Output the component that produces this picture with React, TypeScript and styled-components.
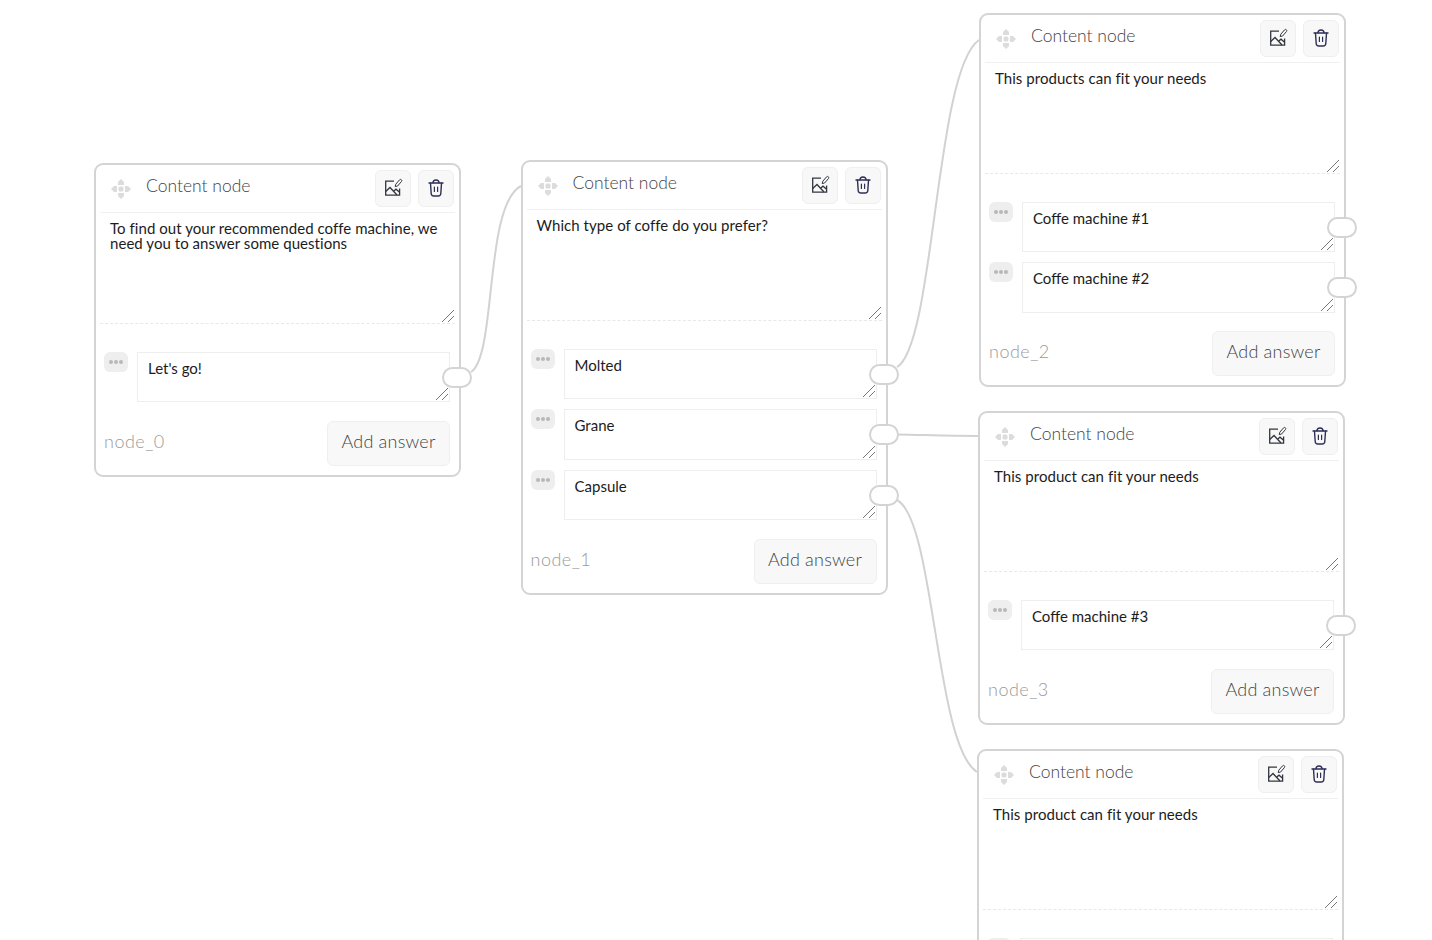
import styled, { createGlobalStyle, css } from "styled-components";

const GlobalStyle = createGlobalStyle`
  html, body {
    margin: 0;
    padding: 0;
    background: #fff;
    font-family: "Lato", "Noto Sans", sans-serif;
  }
`;

const resizer = css`
  &::-webkit-resizer {
    background-image: linear-gradient(
      135deg,
      transparent 47%,
      #777 47%,
      #777 52%,
      transparent 52%,
      transparent 71%,
      #777 71%,
      #777 76%,
      transparent 76%
    );
    background-size: 12px 12px;
    background-position: 2px 2px;
    background-repeat: no-repeat;
  }
`;

const Canvas = styled.div`
  position: relative;
  width: 1432px;
  height: 940px;
  overflow: hidden;
  background: #fff;
`;

const Edges = styled.svg`
  position: absolute;
  inset: 0;
  width: 1432px;
  height: 940px;
  fill: none;
  stroke: #d2d2d2;
  stroke-width: 2;
`;

const NodeCard = styled.div<{ $x: number; $y: number }>`
  position: absolute;
  left: ${(p) => p.$x}px;
  top: ${(p) => p.$y}px;
  width: 367px;
  box-sizing: border-box;
  display: flex;
  flex-direction: column;
  padding: 0 4px 9px;
  background: #fff;
  border: 2px solid #d4d4d4;
  border-radius: 9px;
`;

const Header = styled.div`
  height: 47px;
  display: flex;
  align-items: center;
  gap: 7px;
  padding: 0 1px 0 10px;
  border-bottom: 1px solid #f0f0f0;
`;

const DragIcon = styled.svg`
  width: 22px;
  height: 22px;
  margin-right: 7px;
  fill: #dcdcdc;
`;

const Title = styled.div`
  flex: 1;
  font-size: 17.5px;
  font-weight: 300;
  color: #444;
  margin-bottom: 6px;
`;

const IconButton = styled.button`
  width: 36px;
  height: 37px;
  margin-top: -1px;
  padding: 0;
  display: flex;
  align-items: center;
  justify-content: center;
  background: #f8f8f8;
  border: 1px solid #efefef;
  border-radius: 6px;
`;

const Description = styled.textarea`
  display: block;
  box-sizing: border-box;
  width: 100%;
  height: 111px;
  margin: 0;
  padding: 8px 10px;
  border: none;
  border-bottom: 1px dashed #e8e8e8;
  outline: none;
  font-family: inherit;
  font-size: 15px;
  line-height: 15px;
  letter-spacing: 0.05px;
  color: #1c1c1c;
  ${resizer}
`;

const Answers = styled.div`
  display: flex;
  flex-direction: column;
  gap: 10px;
  margin-top: 27.5px;
  padding: 0 5px 0 4px;
`;

const AnswerRow = styled.div`
  position: relative;
  display: flex;
  align-items: flex-start;
  gap: 9px;
`;

const DotsButton = styled.div`
  flex: none;
  width: 24px;
  height: 20px;
  display: flex;
  align-items: center;
  justify-content: center;
  gap: 1px;
  background: #eeeeee;
  border-radius: 6px;
`;

const Dot = styled.span`
  width: 4px;
  height: 4px;
  border-radius: 50%;
  background: #b8b8b8;
`;

const AnswerInput = styled.textarea`
  display: block;
  box-sizing: border-box;
  flex: 1;
  height: 50.5px;
  margin: 0;
  padding: 6px 10px;
  border: 1px solid #eeeeee;
  border-radius: 0;
  outline: none;
  font-family: inherit;
  font-size: 15px;
  line-height: 18px;
  color: #1c1c1c;
  ${resizer}
`;

const Handle = styled.div`
  position: absolute;
  right: -22px;
  top: 15px;
  box-sizing: border-box;
  width: 30px;
  height: 21px;
  background: #fff;
  border: 2px solid #d4d4d4;
  border-radius: 11px;
`;

const Footer = styled.div`
  display: flex;
  align-items: center;
  justify-content: space-between;
  margin-top: 18.5px;
  padding: 0 5px 0 4px;
`;

const NodeId = styled.span`
  font-size: 18px;
  font-weight: 300;
  letter-spacing: 0.5px;
  color: #9a9a9a;
  margin-bottom: 5px;
`;

const AddButton = styled.button`
  width: 123px;
  height: 45px;
  padding: 0 0 5px;
  background: #f8f8f8;
  border: 1px solid #efefef;
  border-radius: 6px;
  font-family: inherit;
  font-size: 18px;
  font-weight: 300;
  letter-spacing: 0.2px;
  color: #444;
`;

const EditImageIcon = () => (
  <svg width="20" height="20" viewBox="0 0 20 20" fill="none" stroke="#33363f" strokeWidth="1.3">
    <path d="M11 3.2H2.7V17.2H16.6V10.5" />
    <path d="M2.7 13.5L7 9.5L14 17" />
    <path d="M10.8 13L13 11.2L16.6 14.2" />
    <path d="M12.2 8.6L12.8 6.2L16.6 1.8C17.2 1.2 18 1.3 18.4 1.8C18.9 2.3 18.9 3 18.4 3.6L14.6 8L12.2 8.6Z" strokeWidth="1" />
  </svg>
);

const TrashIcon = () => (
  <svg width="20" height="20" viewBox="0 0 20 20" fill="none" stroke="#2c2f57" strokeWidth="1.4" strokeLinecap="round">
    <path d="M3 5H17" />
    <path d="M7 4.8C7 2.8 8 2 10 2C12 2 13 2.8 13 4.8" />
    <path d="M4.5 5.2L5.2 15.5C5.3 17 6.3 18 7.8 18H12.2C13.7 18 14.7 17 14.8 15.5L15.5 5.2" />
    <path d="M8.4 9V13.5" strokeWidth="1.2" />
    <path d="M11.6 9V13.5" strokeWidth="1.2" />
  </svg>
);

const DragGlyph = () => (
  <DragIcon viewBox="0 0 22 22">
    <path d="M11 1L14 4V7H8V4Z" />
    <path d="M11 21L14 18V15H8V18Z" />
    <path d="M1 11L4 8H7V14H4Z" />
    <path d="M21 11L18 8H15V14H18Z" />
    <rect x="8.500" y="8.500" width="5" height="5" rx="1.500" />
  </DragIcon>
);

type FlowNode = {
  id: string;
  x: number;
  y: number;
  text: string;
  answers: string[];
};

const nodes: FlowNode[] = [
  {
    id: "node_0",
    x: 94,
    y: 163,
    text: "To find out your recommended coffe machine, we need you to answer some questions",
    answers: ["Let's go!"],
  },
  {
    id: "node_1",
    x: 520.500,
    y: 160,
    text: "Which type of coffe do you prefer?",
    answers: ["Molted", "Grane", "Capsule"],
  },
  {
    id: "node_2",
    x: 979,
    y: 13,
    text: "This products can fit your needs",
    answers: ["Coffe machine #1", "Coffe machine #2"],
  },
  {
    id: "node_3",
    x: 978,
    y: 411,
    text: "This product can fit your needs",
    answers: ["Coffe machine #3"],
  },
  {
    id: "node_4",
    x: 977,
    y: 749,
    text: "This product can fit your needs",
    answers: [""],
  },
];

const edgePaths = [
  "M471 372C497 355 484 205 521 186",
  "M897 367C935 345 935 70 979 40",
  "M898 434.500C925 435 950 436 978 436",
  "M897 500C935 520 935 745 977 772",
];

const App = () => (
  <Canvas>
    <GlobalStyle />
    <Edges viewBox="0 0 1432 940">
      {edgePaths.map((d) => (
        <path key={d} d={d} />
      ))}
    </Edges>
    {nodes.map((node) => (
      <NodeCard key={node.id} $x={node.x} $y={node.y}>
        <Header>
          <DragGlyph />
          <Title>Content node</Title>
          <IconButton>
            <EditImageIcon />
          </IconButton>
          <IconButton>
            <TrashIcon />
          </IconButton>
        </Header>
        <Description readOnly value={node.text} />
        <Answers>
          {node.answers.map((answer, i) => (
            <AnswerRow key={i}>
              <DotsButton>
                <Dot />
                <Dot />
                <Dot />
              </DotsButton>
              <AnswerInput readOnly value={answer} />
              <Handle />
            </AnswerRow>
          ))}
        </Answers>
        <Footer>
          <NodeId>{node.id}</NodeId>
          <AddButton>Add answer</AddButton>
        </Footer>
      </NodeCard>
    ))}
  </Canvas>
);

export default App;
